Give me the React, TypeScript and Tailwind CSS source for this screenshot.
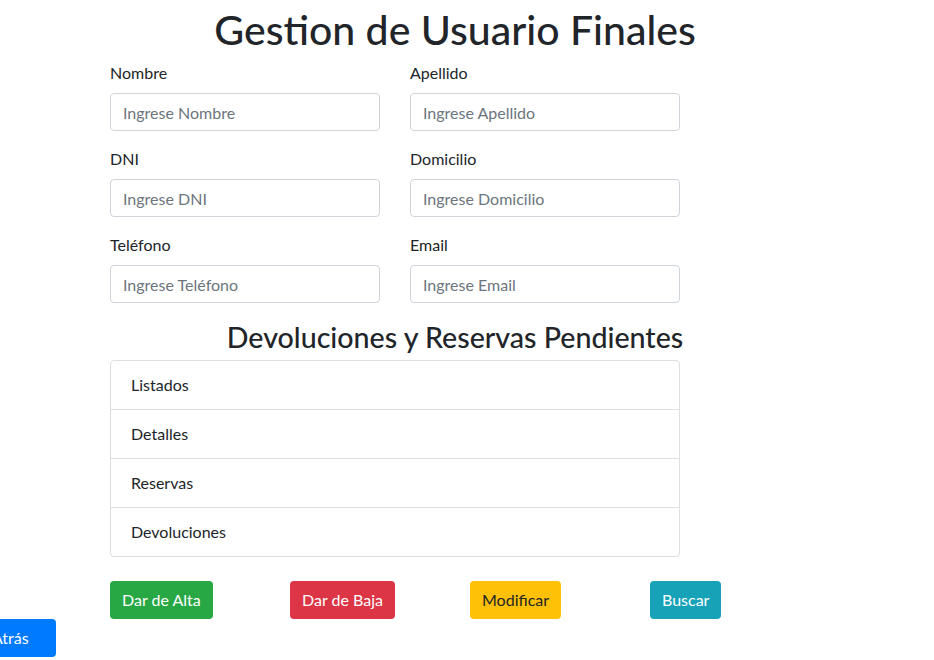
import React from "react";

const fields: [string, string][][] = [
  [["Nombre", "Ingrese Nombre"], ["Apellido", "Ingrese Apellido"]],
  [["DNI", "Ingrese DNI"], ["Domicilio", "Ingrese Domicilio"]],
  [["Teléfono", "Ingrese Teléfono"], ["Email", "Ingrese Email"]],
];

export default function App() {
  return (
    <div
      className="min-h-[660px] w-[934px] overflow-hidden bg-white text-[16px] leading-[1.5] text-[#212529]"
      style={{ fontFamily: "Lato, 'Noto Sans', sans-serif" }}
    >
      <div className="w-[910px]">
        <h1 className="mb-[7px] pt-[6px] text-center text-[41px] font-medium leading-[48px]">
          Gestion de Usuario Finales
        </h1>
        <div className="ml-[110px] w-[570px]">
          {fields.map((row, i) => (
            <div key={i} className="grid grid-cols-2 gap-[30px]">
              {row.map(([label, ph]) => (
                <div key={label} className="mb-[16px]">
                  <label className="mb-[8px] block leading-[24px]">{label}</label>
                  <input
                    placeholder={ph}
                    className="block h-[38px] w-full rounded-[4px] border border-[#ced4da] px-[12px] text-[16px] text-[#495057] outline-none placeholder:text-[#6c757d]"
                  />
                </div>
              ))}
            </div>
          ))}
        </div>
        <h3 className="mt-[1px] mb-[6px] text-center text-[28.6px] font-medium leading-[34px]">
          Devoluciones y Reservas Pendientes
        </h3>
        <ul className="ml-[110px] w-[570px] rounded-[4px] border border-[#dfdfdf]">
          {["Listados", "Detalles", "Reservas", "Devoluciones"].map((t, i) => (
            <li
              key={t}
              className={`px-[20px] py-[12px] leading-[24px] ${i > 0 ? "border-t border-[#dfdfdf]" : ""}`}
            >
              {t}
            </li>
          ))}
        </ul>
        <div className="ml-[110px] mt-[24px] grid w-[720px] grid-cols-4">
          <div>
            <button className="h-[38px] rounded-[4px] bg-[#28a745] px-[12px] text-white">Dar de Alta</button>
          </div>
          <div>
            <button className="h-[38px] rounded-[4px] bg-[#dc3545] px-[12px] text-white">Dar de Baja</button>
          </div>
          <div>
            <button className="h-[38px] rounded-[4px] bg-[#ffc107] px-[12px] text-[#212529]">Modificar</button>
          </div>
          <div>
            <button className="h-[38px] rounded-[4px] bg-[#17a2b8] px-[12px] text-white">Buscar</button>
          </div>
        </div>
        <button className="-ml-[20px] h-[38px] rounded-[4px] bg-[#007bff] pl-[12px] pr-[27px] text-white">
          Atrás
        </button>
      </div>
    </div>
  );
}
